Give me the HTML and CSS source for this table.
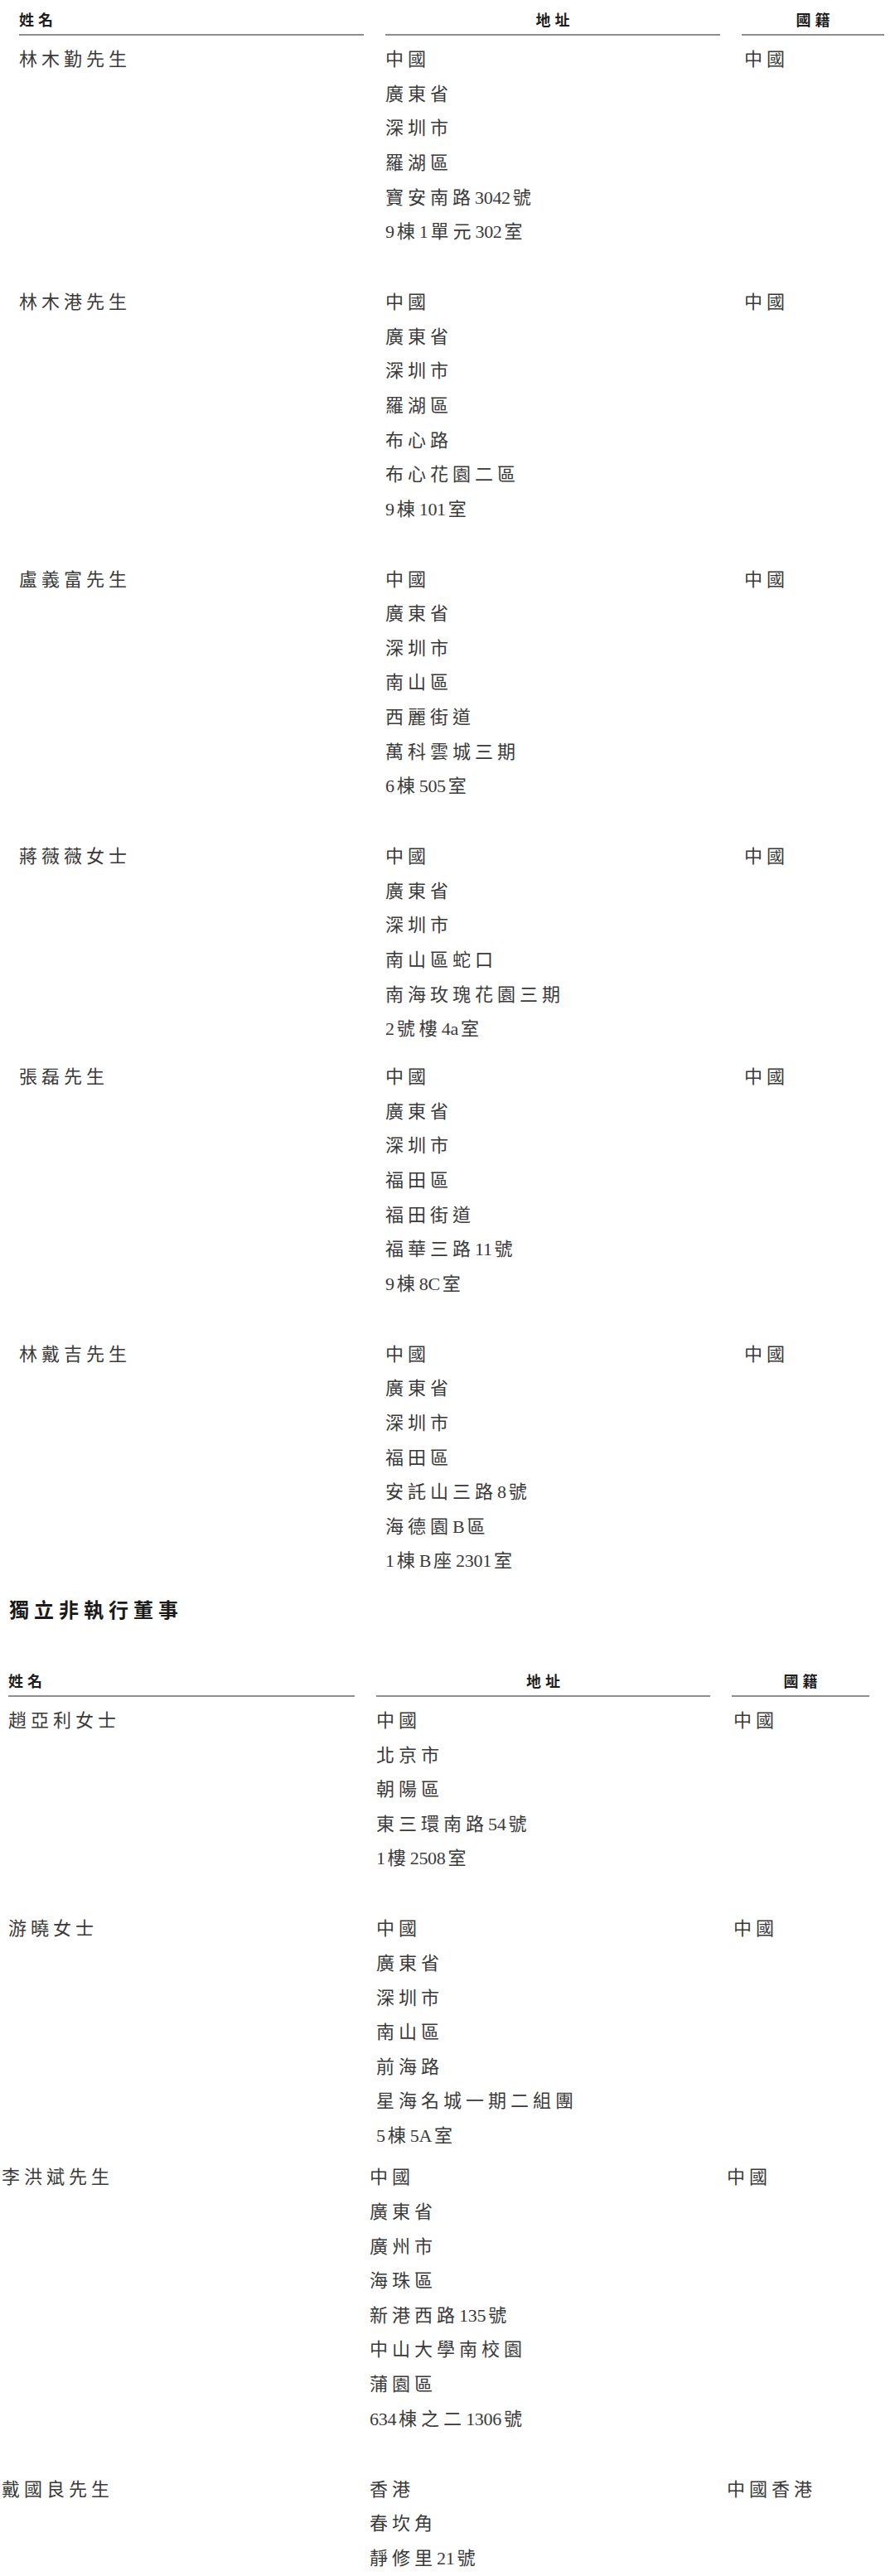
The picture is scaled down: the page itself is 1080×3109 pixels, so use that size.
FILE: index.html
```html
<!DOCTYPE html>
<html lang="zh-Hant">
<head>
<meta charset="utf-8">
<title>董事名單</title>
<link rel="stylesheet" href="styles.css">
</head>
<body>
<main class="sheet">
  <section class="table t1">
    <div class="head">
      <span class="h-name">姓名</span>
      <span class="h-addr">地址</span>
      <span class="h-nat">國籍</span>
    </div>
    <div class="rows">
      <div class="entry">
        <div class="name">林木勤先生</div>
        <div class="addr"><p>中國</p><p>廣東省</p><p>深圳市</p><p>羅湖區</p><p>寶安南路<span class="n">3042</span>號</p><p><span class="n">9</span>棟<span class="n">1</span>單元<span class="n">302</span>室</p></div>
        <div class="nat">中國</div>
      </div>
      <div class="entry">
        <div class="name">林木港先生</div>
        <div class="addr"><p>中國</p><p>廣東省</p><p>深圳市</p><p>羅湖區</p><p>布心路</p><p>布心花園二區</p><p><span class="n">9</span>棟<span class="n">101</span>室</p></div>
        <div class="nat">中國</div>
      </div>
      <div class="entry">
        <div class="name">盧義富先生</div>
        <div class="addr"><p>中國</p><p>廣東省</p><p>深圳市</p><p>南山區</p><p>西麗街道</p><p>萬科雲城三期</p><p><span class="n">6</span>棟<span class="n">505</span>室</p></div>
        <div class="nat">中國</div>
      </div>
      <div class="entry tight">
        <div class="name">蔣薇薇女士</div>
        <div class="addr"><p>中國</p><p>廣東省</p><p>深圳市</p><p>南山區蛇口</p><p>南海玫瑰花園三期</p><p><span class="n">2</span>號樓<span class="n">4a</span>室</p></div>
        <div class="nat">中國</div>
      </div>
      <div class="entry">
        <div class="name">張磊先生</div>
        <div class="addr"><p>中國</p><p>廣東省</p><p>深圳市</p><p>福田區</p><p>福田街道</p><p>福華三路<span class="n">11</span>號</p><p><span class="n">9</span>棟<span class="n">8C</span>室</p></div>
        <div class="nat">中國</div>
      </div>
      <div class="entry">
        <div class="name">林戴吉先生</div>
        <div class="addr"><p>中國</p><p>廣東省</p><p>深圳市</p><p>福田區</p><p>安託山三路<span class="n">8</span>號</p><p>海德園<span class="n">B</span>區</p><p><span class="n">1</span>棟<span class="n">B</span>座<span class="n">2301</span>室</p></div>
        <div class="nat">中國</div>
      </div>
    </div>
  </section>

  <h2 class="section-title">獨立非執行董事</h2>

  <section class="table t2">
    <div class="head">
      <span class="h-name">姓名</span>
      <span class="h-addr">地址</span>
      <span class="h-nat">國籍</span>
    </div>
    <div class="rows">
      <div class="entry">
        <div class="name">趙亞利女士</div>
        <div class="addr"><p>中國</p><p>北京市</p><p>朝陽區</p><p>東三環南路<span class="n">54</span>號</p><p><span class="n">1</span>樓<span class="n">2508</span>室</p></div>
        <div class="nat">中國</div>
      </div>
      <div class="entry tighter">
        <div class="name">游曉女士</div>
        <div class="addr"><p>中國</p><p>廣東省</p><p>深圳市</p><p>南山區</p><p>前海路</p><p>星海名城一期二組團</p><p><span class="n">5</span>棟<span class="n">5A</span>室</p></div>
        <div class="nat">中國</div>
      </div>
      <div class="entry shift">
        <div class="name">李洪斌先生</div>
        <div class="addr"><p>中國</p><p>廣東省</p><p>廣州市</p><p>海珠區</p><p>新港西路<span class="n">135</span>號</p><p>中山大學南校園</p><p>蒲園區</p><p><span class="n">634</span>棟之二<span class="n">1306</span>號</p></div>
        <div class="nat">中國</div>
      </div>
      <div class="entry shift">
        <div class="name">戴國良先生</div>
        <div class="addr"><p>香港</p><p>春坎角</p><p>靜修里<span class="n">21</span>號</p></div>
        <div class="nat">中國香港</div>
      </div>
    </div>
  </section>
</main>
</body>
</html>
```

FILE: styles.css
```css
html, body {
  margin: 0;
  padding: 0;
  background: #ffffff;
}

body {
  font-family: "Liberation Serif", "Noto Sans CJK TC", serif;
  color: #3a3a3a;
  width: 1080px;
}

.sheet {
  display: flex;
  flex-direction: column;
}

.table {
  display: flex;
  flex-direction: column;
}

.t1 {
  padding-top: 13px;
  padding-left: 23px;
}

.t2 {
  margin-top: 59px;
  padding-left: 10px;
}

.head,
.entry {
  display: grid;
  grid-template-columns: 416px 404px 172px;
  column-gap: 26px;
}

.t2 .head,
.t2 .entry {
  grid-template-columns: 418px 403px 166px;
  column-gap: 26px;
}

.head span {
  font-size: 18px;
  font-weight: 700;
  line-height: 24px;
  letter-spacing: 5px;
  color: #1e1e1e;
  padding-bottom: 4px;
  border-bottom: 2px solid #8e8e8e;
}

.h-addr,
.h-nat {
  text-align: center;
  text-indent: 5px;
}

.rows {
  display: flex;
  flex-direction: column;
  padding-top: 8.2px;
}

.entry {
  font-size: 22px;
  line-height: 41.6px;
  letter-spacing: 5px;
  padding-bottom: 43.4px;
}

.entry:last-child {
  padding-bottom: 0;
}

.entry.tight {
  padding-bottom: 16.4px;
}

.entry.tighter {
  padding-bottom: 8.8px;
}

.entry.shift {
  margin-left: -8px;
}

.addr p {
  margin: 0;
  white-space: nowrap;
}

.nat {
  padding-left: 3px;
}

.t2 .nat {
  padding-left: 2px;
}

.n {
  letter-spacing: -0.3px;
  margin-right: 3px;
}

.section-title {
  margin: 24px 0 0 0;
  padding-left: 11px;
  font-size: 24px;
  font-weight: 700;
  line-height: 30px;
  letter-spacing: 6px;
  color: #1a1a1a;
}
```
